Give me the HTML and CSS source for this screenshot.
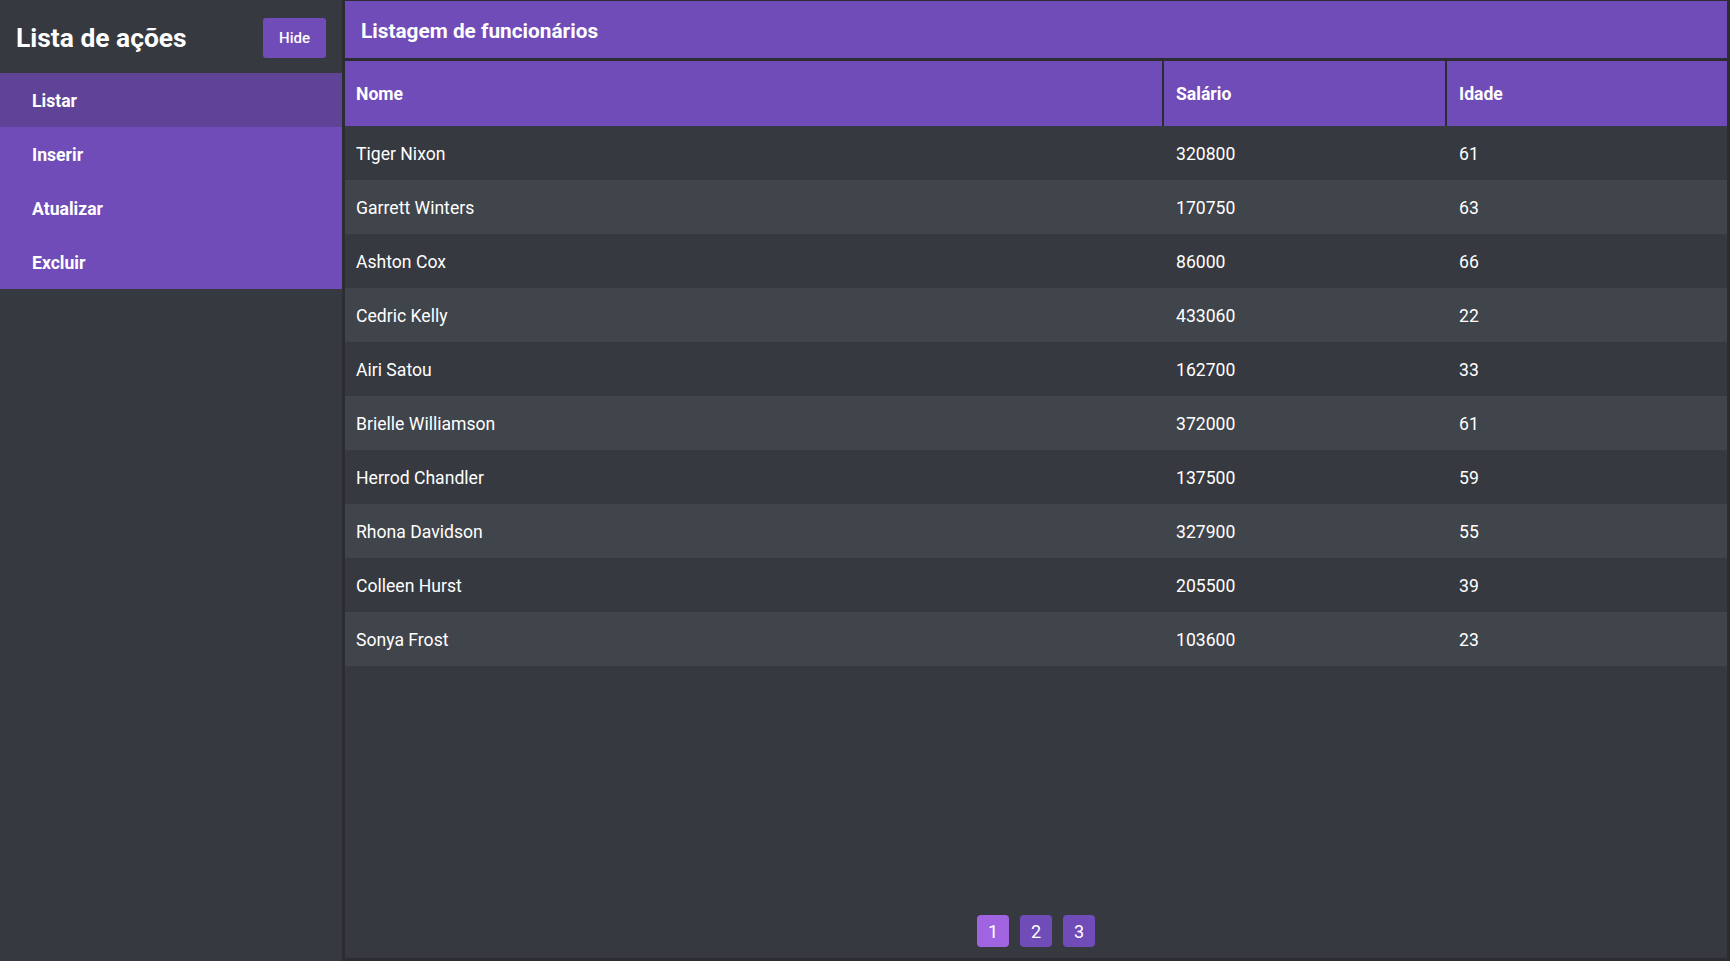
FILE: index.html
```html
<!DOCTYPE html>
<html lang="pt">
<head>
<meta charset="utf-8">
<title>Listagem de funcionários</title>
<link rel="stylesheet" href="styles.css">
</head>
<body>
<div class="app">
  <aside class="sidebar">
    <div class="side-head">
      <h1 class="side-title">Lista de ações</h1>
      <button class="hide-btn">Hide</button>
    </div>
    <nav class="menu">
      <a class="menu-item active">Listar</a>
      <a class="menu-item">Inserir</a>
      <a class="menu-item">Atualizar</a>
      <a class="menu-item">Excluir</a>
    </nav>
  </aside>
  <main class="main">
    <header class="main-head">Listagem de funcionários</header>
    <table class="grid">
      <thead>
        <tr><th class="c-name">Nome</th><th class="c-sal">Salário</th><th class="c-age">Idade</th></tr>
      </thead>
      <tbody>
        <tr><td>Tiger Nixon</td><td>320800</td><td>61</td></tr>
        <tr><td>Garrett Winters</td><td>170750</td><td>63</td></tr>
        <tr><td>Ashton Cox</td><td>86000</td><td>66</td></tr>
        <tr><td>Cedric Kelly</td><td>433060</td><td>22</td></tr>
        <tr><td>Airi Satou</td><td>162700</td><td>33</td></tr>
        <tr><td>Brielle Williamson</td><td>372000</td><td>61</td></tr>
        <tr><td>Herrod Chandler</td><td>137500</td><td>59</td></tr>
        <tr><td>Rhona Davidson</td><td>327900</td><td>55</td></tr>
        <tr><td>Colleen Hurst</td><td>205500</td><td>39</td></tr>
        <tr><td>Sonya Frost</td><td>103600</td><td>23</td></tr>
      </tbody>
    </table>
    <div class="pager">
      <button class="page current">1</button>
      <button class="page">2</button>
      <button class="page">3</button>
    </div>
  </main>
</div>
</body>
</html>
```
FILE: styles.css
```css
* { box-sizing: border-box; }
html, body { margin: 0; padding: 0; height: 100%; }
body {
  font-family: Roboto, "Liberation Sans", sans-serif;
  background: #363940;
  color: #ffffff;
}
.app {
  display: flex;
  height: 961px;
}
.sidebar {
  width: 345px;
  flex: none;
  border-right: 3px solid #2b2d32;
  background: #363940;
  display: flex;
  flex-direction: column;
}
.side-head {
  height: 73px;
  display: flex;
  align-items: center;
  justify-content: space-between;
  padding: 0 16px 0 16px;
}
.side-title {
  margin: 0;
  padding-top: 2px;
  font-size: 26.4px;
  font-weight: 700;
}
.hide-btn {
  width: 63px;
  height: 40px;
  margin-top: 3px;
  border: none;
  border-radius: 3px;
  background: #704cb8;
  color: #fff;
  font-family: inherit;
  font-size: 15px;
  font-weight: 500;
}
.menu {
  display: flex;
  flex-direction: column;
  background: #704cb8;
}
.menu-item {
  height: 54px;
  display: flex;
  align-items: center;
  padding-left: 32px;
  padding-top: 2px;
  font-size: 17.6px;
  font-weight: 700;
  color: #fff;
}
.menu-item.active { background: #5e4396; }
.main {
  flex: 1;
  display: flex;
  flex-direction: column;
  border-top: 1px solid #2b2d32;
  border-right: 3px solid #2b2d32;
  border-bottom: 3px solid #2b2d32;
}
.main-head {
  height: 60px;
  background: #704cb8;
  display: flex;
  align-items: center;
  padding-left: 16px;
  padding-top: 2px;
  font-size: 20.8px;
  font-weight: 700;
  border-bottom: 3px solid #2b2d32;
}
.grid {
  width: 100%;
  border-collapse: collapse;
  table-layout: fixed;
}
.grid th {
  height: 65px;
  background: #704cb8;
  text-align: left;
  font-size: 17.6px;
  font-weight: 700;
  padding: 0 11px;
}
.grid th + th { border-left: 2px solid #2b2d32; padding-left: 12px; }
.c-name { width: 818px; }
.c-sal { width: 283px; }
.grid td {
  height: 54px;
  padding: 2px 11px 0;
  font-size: 17.6px;
  font-weight: 400;
}
.grid td + td { padding-left: 13px; }
.grid tbody tr:nth-child(even) { background: #40444b; }
.pager {
  margin-top: auto;
  display: flex;
  justify-content: center;
  gap: 11px;
  padding-bottom: 11px;
}
.page {
  width: 32px;
  height: 32px;
  border: none;
  border-radius: 4px;
  background: #704cb8;
  color: #fff;
  font-family: inherit;
  font-size: 18px;
  padding: 0;
}
.page.current { background: #a064e0; }
```
